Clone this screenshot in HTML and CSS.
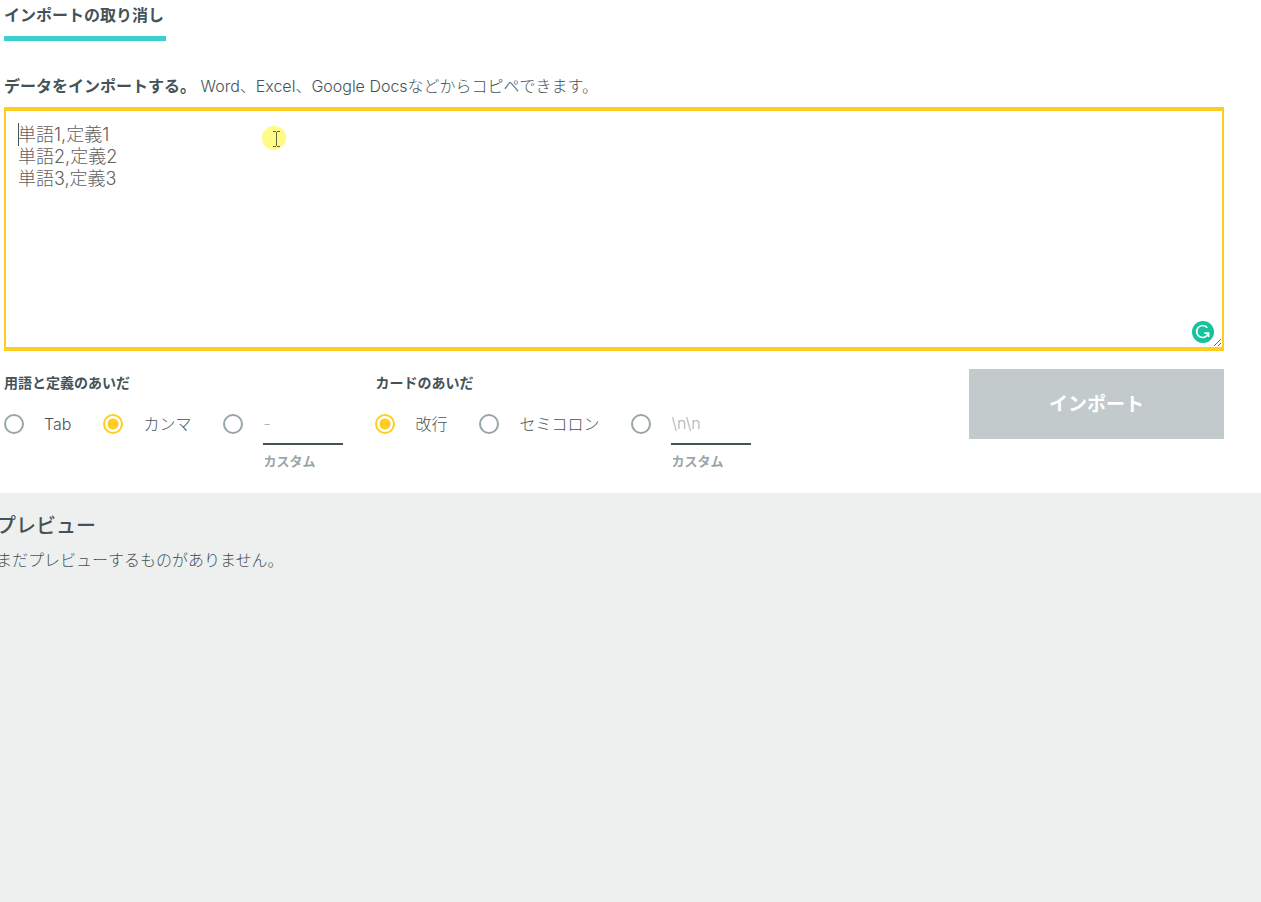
FILE: index.html
```html
<!DOCTYPE html>
<html lang="ja">
<head>
<meta charset="utf-8">
<meta name="viewport" content="width=device-width, initial-scale=1">
<title>インポート</title>
<link rel="stylesheet" href="styles.css">
</head>
<body>
<form class="import">
  <button class="cancel" type="button">インポートの取り消し</button>
  <label class="intro" for="data"><strong>データをインポートする。</strong> Word、Excel、Google Docsなどからコピペできます。</label>
  <div class="editor">
    <textarea class="editor-text" id="data" placeholder="単語1,定義1&#10;単語2,定義2&#10;単語3,定義3"></textarea>
    <span class="caret"></span>
    <svg class="pointer" viewBox="0 0 24 24" aria-hidden="true">
      <circle cx="12" cy="12" r="12" fill="#fffb87"/>
      <path d="M11 5.500h3M15 5.500h3M11 20.500h3M15 20.500h3M14.500 6v14" stroke="#66663c" fill="none"/>
    </svg>
    <svg class="checker" viewBox="0 0 22 22" aria-hidden="true">
      <circle cx="11" cy="11" r="11" fill="#15c39a"/>
      <path d="M15.300 6.700A6 6 0 1 0 16.400 12.200H12.300M16.600 12v4" stroke="#fff" stroke-width="1.700" fill="none"/>
    </svg>
  </div>
  <div class="options">
    <fieldset class="group">
      <legend class="group-title">用語と定義のあいだ</legend>
      <div class="choices">
        <label class="choice"><input class="radio" type="radio" name="term">Tab</label>
        <label class="choice"><input class="radio" type="radio" name="term" checked>カンマ</label>
        <div class="choice">
          <input class="radio" type="radio" name="term" aria-label="カスタム">
          <div class="custom">
            <input class="custom-input" id="term-custom" type="text" placeholder="-">
            <label class="custom-label" for="term-custom">カスタム</label>
          </div>
        </div>
      </div>
    </fieldset>
    <fieldset class="group">
      <legend class="group-title">カードのあいだ</legend>
      <div class="choices">
        <label class="choice"><input class="radio" type="radio" name="card" checked>改行</label>
        <label class="choice"><input class="radio" type="radio" name="card">セミコロン</label>
        <div class="choice">
          <input class="radio" type="radio" name="card" aria-label="カスタム">
          <div class="custom">
            <input class="custom-input" id="card-custom" type="text" placeholder="\n\n">
            <label class="custom-label" for="card-custom">カスタム</label>
          </div>
        </div>
      </div>
    </fieldset>
    <button class="submit" type="submit" disabled>インポート</button>
  </div>
</form>
<section class="preview">
  <h2 class="preview-title">プレビュー</h2>
  <p class="preview-text">まだプレビューするものがありません。</p>
</section>
</body>
</html>
```

FILE: styles.css
```css
* {
  box-sizing: border-box;
}

body {
  margin: 0;
  min-height: 100vh;
  display: flex;
  flex-direction: column;
  background: #fff;
  color: #455358;
  font: 300 16px/24px Inter, "Noto Sans CJK JP", sans-serif;
}

button,
input,
textarea {
  font: inherit;
  color: inherit;
  margin: 0;
}

.import {
  display: flex;
  flex-direction: column;
  align-items: flex-start;
  padding: 3px 37px 22px 4px;
}

.cancel {
  padding: 0 2px 9px 0;
  border: 0;
  border-bottom: 5px solid #3ccfcf;
  background: none;
  font-weight: 700;
}

.intro {
  margin: 33px 0 9px;
}

.intro strong {
  font-weight: 700;
}

.editor {
  position: relative;
  width: 100%;
}

.editor-text {
  display: block;
  width: 100%;
  height: 244px;
  padding: 13px 12px;
  border: solid #ffcd1f;
  border-width: 4px 2px;
  border-radius: 0;
  outline: 0;
  resize: vertical;
  font-size: 18px;
  line-height: 22px;
}

.editor-text::placeholder {
  color: #606060;
}

.caret {
  position: absolute;
  left: 14px;
  top: 16px;
  width: 1px;
  height: 23px;
  background: #455358;
}

.pointer {
  position: absolute;
  left: 258px;
  top: 19px;
  width: 24px;
  height: 24px;
}

.checker {
  position: absolute;
  right: 10px;
  bottom: 8px;
  width: 22px;
  height: 22px;
}

.options {
  display: flex;
  align-items: flex-start;
  gap: 32px;
  width: 100%;
  padding-top: 18px;
}

.group {
  min-width: 0;
  margin: 0;
  padding: 0;
  border: 0;
}

.group-title {
  padding: 4px 0 0;
  font-size: 14px;
  font-weight: 700;
  line-height: 20px;
}

.choices {
  display: flex;
  gap: 32px;
  padding-top: 19px;
}

.choice {
  display: flex;
  align-items: flex-start;
  gap: 20px;
  white-space: nowrap;
}

.radio {
  appearance: none;
  flex: none;
  width: 20px;
  height: 20px;
  margin-top: 2px;
  border: 2px solid #98a5a9;
  border-radius: 50%;
}

.radio:checked {
  border-color: #ffcd1f;
  background: radial-gradient(circle, #ffcd1f 5px, #fff 6px);
}

.custom {
  display: flex;
  flex-direction: column;
  gap: 7px;
}

.custom-input {
  width: 80px;
  height: 33px;
  padding: 0 0 10px;
  border: 0;
  border-bottom: 2px solid #455358;
  border-radius: 0;
  background: none;
}

.custom-input::placeholder {
  color: #aab3b6;
}

.custom-label {
  color: #98a5a9;
  font-size: 13px;
  font-weight: 700;
  line-height: 18px;
}

.submit {
  width: 255px;
  height: 70px;
  margin-left: auto;
  padding: 2px 0 0;
  border: 0;
  background: #c2cacc;
  color: #fff;
  font-size: 19px;
  font-weight: 700;
}

.preview {
  flex: 1;
  overflow: hidden;
  margin-top: 1px;
  padding-top: 21px;
  background: #eef0ef;
}

.preview-title,
.preview-text {
  margin: 0 0 0 -4px;
}

.preview-title {
  margin-bottom: 10px;
  font-size: 20px;
  font-weight: 500;
}
```
